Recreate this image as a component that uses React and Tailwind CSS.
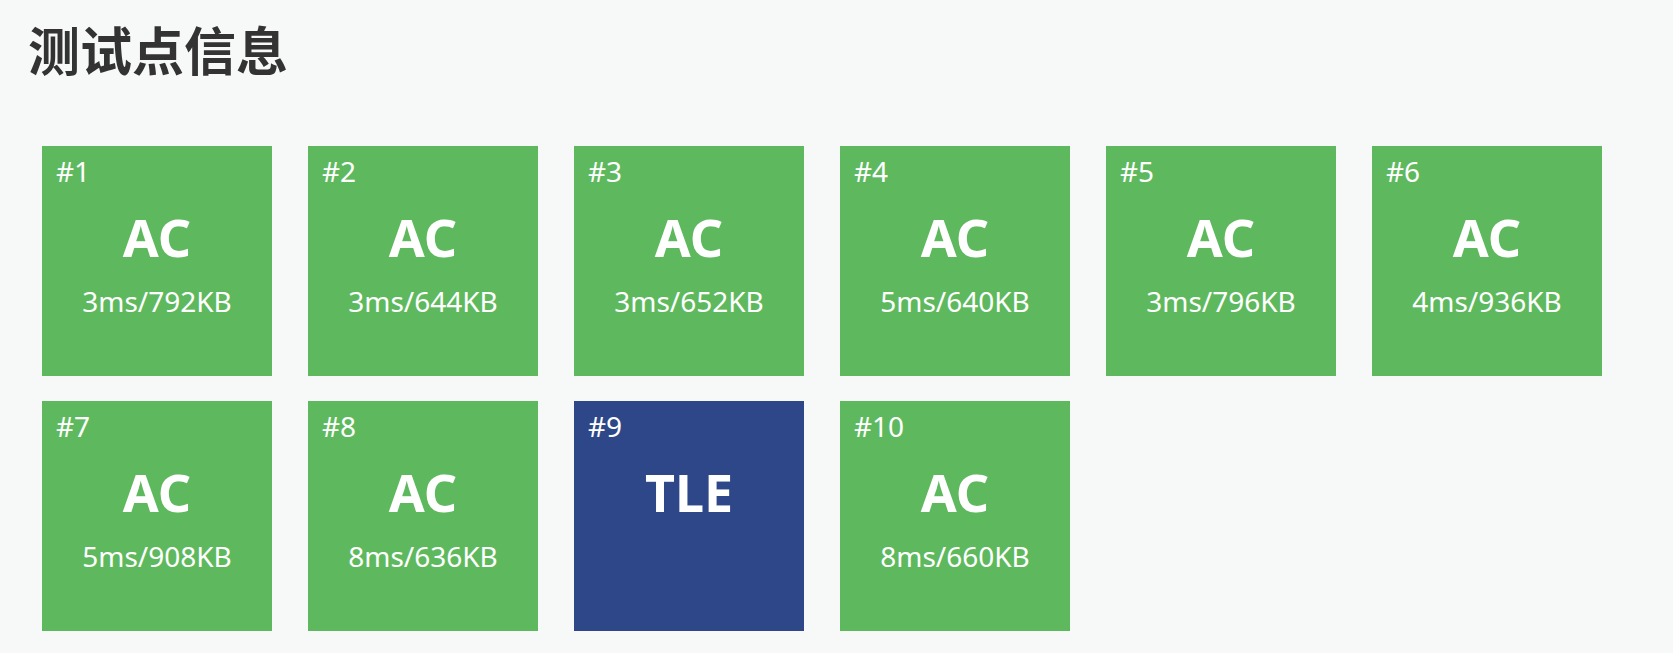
import React from 'react';

const cases = [
  { id: 1, status: 'AC', info: '3ms/792KB' },
  { id: 2, status: 'AC', info: '3ms/644KB' },
  { id: 3, status: 'AC', info: '3ms/652KB' },
  { id: 4, status: 'AC', info: '5ms/640KB' },
  { id: 5, status: 'AC', info: '3ms/796KB' },
  { id: 6, status: 'AC', info: '4ms/936KB' },
  { id: 7, status: 'AC', info: '5ms/908KB' },
  { id: 8, status: 'AC', info: '8ms/636KB' },
  { id: 9, status: 'TLE', info: '' },
  { id: 10, status: 'AC', info: '8ms/660KB' },
];

const TestCase = ({ id, status, info }) => {
  const bg = status === 'AC' ? 'bg-[#5eb95e]' : 'bg-[#2e4789]';
  return (
    <div className={`${bg} w-[230px] h-[230px] text-white flex flex-col pt-[11px] px-[14px]`}>
      <div className="text-[28px] leading-none">#{id}</div>
      <div className="mt-[26px] text-center text-[52px] font-bold leading-none">{status}</div>
      {info && <div className="mt-[24px] text-center text-[28px] leading-none">{info}</div>}
    </div>
  );
};

export default function App() {
  return (
    <div className="min-h-screen bg-[#f7f9f9] pt-[25px] pl-[28px] font-['Noto_Sans','Noto_Sans_CJK_SC',sans-serif]">
      <h1 className="text-[52px] font-bold leading-none text-[#333333]">测试点信息</h1>
      <div className="mt-[69px] ml-[14px] flex flex-wrap gap-x-[36px] gap-y-[25px] w-[1600px]">
        {cases.map((c) => (
          <TestCase key={c.id} {...c} />
        ))}
      </div>
    </div>
  );
}
